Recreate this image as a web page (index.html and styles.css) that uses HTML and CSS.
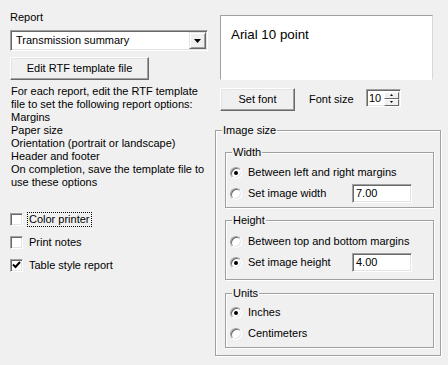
FILE: index.html
```html
<html>
  <head>
    <link rel="stylesheet" href="styles.css">
  </head>

  <body>
    <main class="dialog">
      <section class="col-left">
        <div class="label">Report</div>
        <div class="combo">
          <span class="combo-text">Transmission summary</span>
          <span class="combo-btn">
            <svg width="7" height="4" viewBox="0 0 7 4"><path d="M0 0h7L3.5 4z" fill="#000"/></svg>
          </span>
        </div>
        <button class="btn btn-edit">Edit RTF template file</button>
        <p class="help">For each report, edit the RTF template<br>file to set the following report options:<br>Margins<br>Paper size<br>Orientation (portrait or landscape)<br>Header and footer<br>On completion, save the template file to<br>use these options</p>
        <div class="checks">
          <label class="check"><span class="box"></span><span class="check-text is-focused">Color printer</span></label>
          <label class="check"><span class="box"></span><span class="check-text">Print notes</span></label>
          <label class="check">
            <span class="box">
              <svg width="9" height="9" viewBox="0 0 9 9"><path d="M1 3.5l2.5 2.5 4.5-5" fill="none" stroke="#000" stroke-width="2"/></svg>
            </span>
            <span class="check-text">Table style report</span>
          </label>
        </div>
      </section>

      <section class="col-right">
        <div class="preview">Arial 10 point</div>
        <div class="font-row">
          <button class="btn btn-font">Set font</button>
          <span class="font-label">Font size</span>
          <div class="spin">
            <span class="spin-value">10</span>
            <span class="spin-btns">
              <span class="spin-btn"><svg width="3" height="2" viewBox="0 0 3 2"><path d="M0 2h3L1.5 0z" fill="#000"/></svg></span>
              <span class="spin-btn"><svg width="3" height="2" viewBox="0 0 3 2"><path d="M0 0h3L1.5 2z" fill="#000"/></svg></span>
            </span>
          </div>
        </div>

        <div class="group group-outer">
          <div class="group-title">Image size</div>

          <div class="group group-width">
            <div class="group-title">Width</div>
            <div class="row">
              <span class="radio is-checked"><span class="dot"></span></span>
              <span class="row-text">Between left and right margins</span>
            </div>
            <div class="row">
              <span class="radio"></span>
              <span class="row-text row-text-fixed">Set image width</span>
              <span class="edit">7.00</span>
            </div>
          </div>

          <div class="group group-height">
            <div class="group-title">Height</div>
            <div class="row">
              <span class="radio"></span>
              <span class="row-text">Between top and bottom margins</span>
            </div>
            <div class="row">
              <span class="radio is-checked"><span class="dot"></span></span>
              <span class="row-text row-text-fixed">Set image height</span>
              <span class="edit">4.00</span>
            </div>
          </div>

          <div class="group group-units">
            <div class="group-title">Units</div>
            <div class="row">
              <span class="radio is-checked"><span class="dot"></span></span>
              <span class="row-text">Inches</span>
            </div>
            <div class="row">
              <span class="radio"></span>
              <span class="row-text">Centimeters</span>
            </div>
          </div>
        </div>
      </section>
    </main>
  </body>
</html>
```

FILE: styles.css
```css
:root {
  --color-face: #f0f0f0;
  --color-light: #ffffff;
  --color-shadow: #a0a0a0;
  --color-dark: #696969;
  --color-soft: #e3e3e3;
}

* {
  box-sizing: border-box;
}

html {
  font-family: 'Liberation Sans', Arial, sans-serif;
  font-size: 11px;
  line-height: 13px;
  color: #000;
}

body {
  margin: 0;
  background-color: var(--color-face);
  overflow: hidden;
}

.dialog {
  display: flex;
  padding-left: 10px;
}

/* left column */

.col-left {
  width: 198px;
  padding-top: 11px;
}

.combo {
  display: flex;
  align-items: center;
  height: 21px;
  margin-top: 6px;
  padding: 0 1px 0 5px;
  background-color: #fff;
  border: 1px solid;
  border-color: var(--color-shadow) var(--color-light) var(--color-light) var(--color-shadow);
  box-shadow: inset 1px 1px 0 var(--color-dark), inset -1px -1px 0 var(--color-soft);
}

.combo-text {
  flex: 1;
}

.combo-btn {
  display: flex;
  align-items: center;
  justify-content: center;
  width: 17px;
  height: 17px;
  background-color: var(--color-face);
  border: 1px solid;
  border-color: var(--color-soft) var(--color-dark) var(--color-dark) var(--color-soft);
  box-shadow: inset 1px 1px 0 var(--color-light), inset -1px -1px 0 var(--color-shadow);
}

.btn {
  display: flex;
  align-items: center;
  justify-content: center;
  font: inherit;
  color: #000;
  padding: 0;
  background-color: var(--color-face);
  border: 1px solid;
  border-color: var(--color-light) var(--color-dark) var(--color-dark) var(--color-light);
  box-shadow: inset -1px -1px 0 var(--color-shadow), inset 1px 1px 0 var(--color-soft);
}

.btn-edit {
  width: 139px;
  height: 23px;
  margin-top: 6px;
}

.help {
  margin: 5px 0 0 1px;
  white-space: nowrap;
}

.checks {
  margin-top: 19px;
}

.check {
  display: flex;
  align-items: center;
  height: 23px;
}

.box {
  display: flex;
  align-items: center;
  justify-content: center;
  width: 13px;
  height: 13px;
  margin-right: 4px;
  background-color: #fff;
  border: 1px solid;
  border-color: var(--color-shadow) var(--color-light) var(--color-light) var(--color-shadow);
  box-shadow: inset 1px 1px 0 var(--color-dark), inset -1px -1px 0 var(--color-soft);
}

.check-text {
  padding: 0 1px;
  border: 1px dotted transparent;
}

.check-text.is-focused {
  border-color: #000;
}

/* right column */

.col-right {
  width: 226px;
  margin-left: 7px;
  padding-top: 15px;
}

.preview {
  height: 65px;
  margin-left: 5px;
  padding: 11px 10px;
  width: 213px;
  font-size: 13.33px;
  line-height: 16px;
  background-color: #fff;
  border: 1px solid;
  border-color: var(--color-shadow) #d8d8d8 var(--color-light) var(--color-shadow);
}

.font-row {
  display: flex;
  align-items: flex-start;
  margin: 8px 0 0 5px;
}

.btn-font {
  width: 75px;
  height: 23px;
}

.font-label {
  width: 57px;
  margin-left: 14px;
  line-height: 23px;
}

.spin {
  display: flex;
  align-items: center;
  width: 35px;
  height: 18px;
  margin-top: 1px;
  padding: 0 1px 0 2px;
  background-color: #fff;
  border: 1px solid;
  border-color: var(--color-shadow) var(--color-light) var(--color-light) var(--color-shadow);
  box-shadow: inset 1px 1px 0 var(--color-dark), inset -1px -1px 0 var(--color-soft);
}

.spin-value {
  flex: 1;
  padding-top: 1px;
}

.spin-btns {
  display: flex;
  flex-direction: column;
  margin-top: 1px;
}

.spin-btn {
  display: flex;
  align-items: center;
  justify-content: center;
  width: 15px;
  height: 7px;
  background-color: var(--color-face);
  border: 1px solid;
  border-color: var(--color-light) var(--color-dark) var(--color-dark) var(--color-light);
}

.group {
  border: 1px solid var(--color-shadow);
  box-shadow: 1px 1px 0 var(--color-light), inset 1px 1px 0 var(--color-light);
}

.group-title {
  width: fit-content;
  margin: -7px 0 0 2px;
  padding: 0 1px;
  background-color: var(--color-face);
}

.group-outer {
  margin-top: 19px;
  padding: 0 6px 7px 9px;
}

.group-outer > .group-title {
  margin-left: -3px;
}

.group-width {
  margin-top: 15px;
  padding: 0 0 3px 4px;
}

.group-width > .group-title + .row {
  margin-top: 3px;
}

.group-height {
  margin-top: 12px;
  padding: 0 0 6px 4px;
}

.group-height > .group-title + .row {
  margin-top: 4px;
}

.group-units {
  margin-top: 13px;
  padding: 0 0 3px 4px;
}

.group-units > .group-title + .row {
  margin-top: 2px;
}

.row {
  display: flex;
  align-items: center;
  height: 21px;
}

.radio {
  display: flex;
  align-items: center;
  justify-content: center;
  width: 12px;
  height: 12px;
  margin-right: 6px;
  border-radius: 50%;
  background-color: #fff;
  border: 1px solid;
  border-color: var(--color-shadow) var(--color-light) var(--color-light) var(--color-shadow);
  box-shadow: inset 1px 1px 0 var(--color-dark), inset -1px -1px 0 var(--color-soft);
}

.dot {
  width: 4px;
  height: 4px;
  border-radius: 50%;
  background-color: #000;
}

.row-text-fixed {
  width: 104px;
}

.edit {
  width: 60px;
  height: 19px;
  padding: 2px 0 0 3px;
  background-color: #fff;
  border: 1px solid;
  border-color: var(--color-shadow) var(--color-light) var(--color-light) var(--color-shadow);
  box-shadow: inset 1px 1px 0 var(--color-dark), inset -1px -1px 0 var(--color-soft);
}
```
